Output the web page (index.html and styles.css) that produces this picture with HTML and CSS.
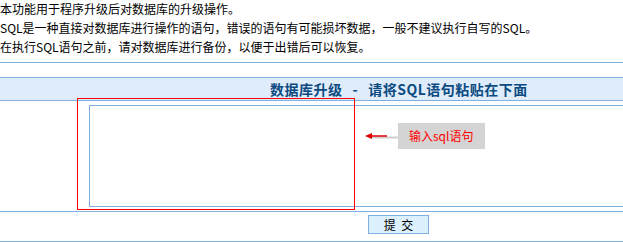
FILE: index.html
```html
<!DOCTYPE html>
<html lang="zh-CN">
<head>
    <meta charset="UTF-8">
    <title>数据库升级</title>
    <link rel="stylesheet" href="styles.css">
</head>
<body>
    <div class="intro">
        <p>本功能用于程序升级后对数据库的升级操作。</p>
        <p>SQL是一种直接对数据库进行操作的语句，错误的语句有可能损坏数据，一般不建议执行自写的SQL。</p>
        <p>在执行SQL语句之前，请对数据库进行备份，以便于出错后可以恢复。</p>
    </div>

    <form class="panel" id="upgradeForm">
        <div class="panel-head">
            数据库升级<span class="sep">-</span>请将SQL语句粘贴在下面
        </div>
        <div class="panel-body">
            <textarea class="sql-input" name="sql"></textarea>
        </div>
        <div class="panel-foot">
            <button type="submit" class="btn">提&nbsp;交</button>
        </div>

        <!-- annotation -->
        <div class="mark-box"></div>
        <svg class="mark-arrow" width="33" height="10" viewBox="0 0 33 10">
            <line x1="4" y1="6.5" x2="33" y2="6.5" stroke="#cfcfcf" stroke-width="2"/>
            <line x1="4" y1="5" x2="22" y2="5" stroke="#e00000" stroke-width="1.5"/>
            <polygon points="0,5 7,2 7,8" fill="#e00000"/>
        </svg>
        <div class="mark-label">输入sql语句</div>
    </form>
</body>
</html>
```

FILE: styles.css
```css
html, body {
    overflow: hidden;
}
body {
    margin: 0;
    font-family: "Noto Sans CJK SC", "Liberation Sans", sans-serif;
    font-size: 12px;
    color: #000000;
    background-color: #ffffff;
}
.intro {
    margin: -1px 0 0 0;
}
.intro p {
    margin: 0;
    line-height: 19px;
    white-space: nowrap;
}
.panel {
    position: relative;
    margin: 6px 0 0 0;
    border-top: 1px solid #80b0e0;
    padding-top: 14px;
}
.panel-head {
    height: 22px;
    line-height: 22px;
    padding-left: 270px;
    background-color: #deecfc;
    border-top: 1px solid #80b0e0;
    border-bottom: 1px solid #80b0e0;
    font-size: 14px;
    font-weight: bold;
    letter-spacing: 0.5px;
    color: #0c4a80;
    white-space: nowrap;
}
.sep {
    margin: 0 10px;
}
.panel-body {
    padding: 4px 0 4px 89px;
    border-bottom: 1px solid #80b0e0;
}
.sql-input {
    display: block;
    box-sizing: border-box;
    width: 100%;
    height: 102px;
    margin: 0;
    border: 1px solid #80b0e0;
    border-right: 0;
    resize: none;
    font-family: inherit;
    font-size: 12px;
}
.panel-foot {
    height: 26px;
    padding-left: 368px;
    border-bottom: 1px solid #80b0e0;
}
.btn {
    display: block;
    box-sizing: border-box;
    width: 61px;
    height: 19px;
    margin-top: 3px;
    padding: 0;
    background-color: #dcf0fe;
    border: 1px solid #80b0e0;
    font-family: inherit;
    font-size: 12px;
    line-height: 17px;
    word-spacing: 3px;
    color: #000000;
}
.mark-box {
    position: absolute;
    left: 77px;
    top: 35px;
    width: 276px;
    height: 110px;
    border: 1px solid #ff0000;
}
.mark-arrow {
    position: absolute;
    left: 365px;
    top: 68px;
}
.mark-label {
    position: absolute;
    left: 398px;
    top: 60px;
    width: 76px;
    height: 26px;
    padding-left: 11px;
    line-height: 26px;
    background-color: #d4d4d4;
    color: #ff0000;
}
```
